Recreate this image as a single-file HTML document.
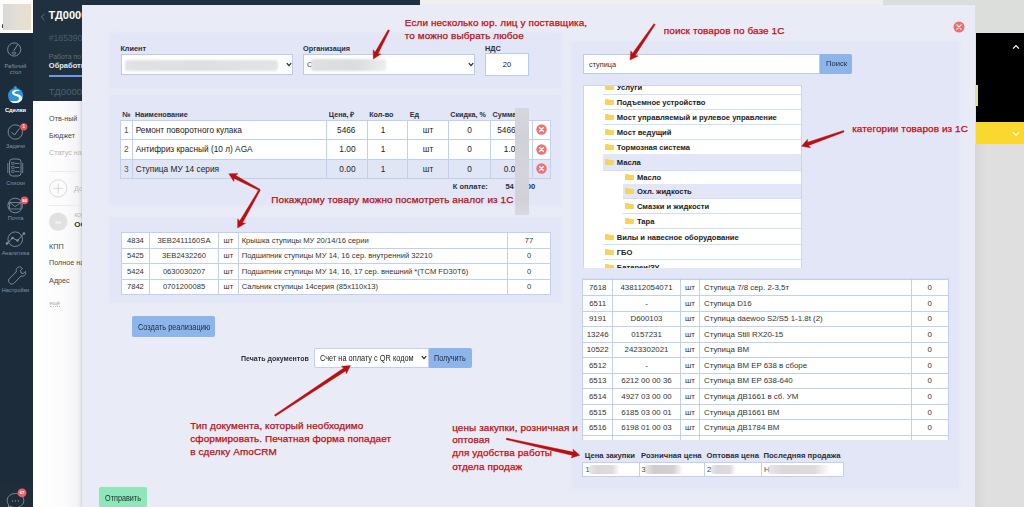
<!DOCTYPE html>
<html><head><meta charset="utf-8">
<style>
*{margin:0;padding:0;box-sizing:border-box}
html,body{width:1024px;height:507px;overflow:hidden;background:#e0dfdf;font-family:"Liberation Sans",sans-serif;position:relative}
.a{position:absolute}
.nw{white-space:nowrap}
</style></head><body>

<div class="a" style="left:0.00px;top:0.00px;width:33.00px;height:507.00px;background:#1d2c3a"></div>
<div class="a" style="left:33.00px;top:0.00px;width:387.00px;height:101.00px;background:#1f313f"></div>
<div class="a" style="left:420.00px;top:0.00px;width:463.00px;height:33.00px;background:#eff0ed"></div>
<div class="a" style="left:883.00px;top:0.00px;width:141.00px;height:33.00px;background:#dcdedb"></div>
<div class="a" style="left:33.00px;top:101.00px;width:49.00px;height:406.00px;background:linear-gradient(90deg,#fdfefe 0%,#fcfcfd 60%,#f4f4f6 90%,#e4e4e8 100%)"></div>
<div class="a" style="left:976.00px;top:33.00px;width:48.00px;height:89.00px;background:#000"></div>
<div class="a" style="left:976.00px;top:122.00px;width:48.00px;height:22.00px;background:#fbd82f"></div>
<div class="a" style="left:975.00px;top:144.00px;width:11.00px;height:363.00px;background:linear-gradient(90deg,#d6d6d8,#dfdede)"></div>
<svg class="a" style="left:1011.5px;top:43.5px" width="8" height="6" viewBox="0 0 8 6"><path d="M1 4.6 L4 1.6 L7 4.6" fill="none" stroke="#fff" stroke-width="1.3"/></svg>
<svg class="a" style="left:1011.5px;top:131px" width="8" height="6" viewBox="0 0 8 6"><path d="M1 1.4 L4 4.4 L7 1.4" fill="none" stroke="#fff" stroke-width="1.3"/></svg>
<div class="a" style="left:975.00px;top:85.00px;width:2.50px;height:20.50px;background:#e4e27a"></div>
<div class="a" style="left:0.00px;top:0.00px;width:32.50px;height:32.50px;background:#fbfbfa"></div>
<div class="a" style="left:3.00px;top:3.50px;width:28.00px;height:26.50px;background:linear-gradient(90deg,#d9d8d6 0%,#e2ddd6 45%,#e9dfcb 100%);filter:blur(0.5px)"></div>
<div class="a" style="left:1.80px;top:23.50px;width:1.50px;height:4.00px;background:#3a3a3a;border-radius:1px;filter:blur(0.4px)"></div>
<svg class="a" style="left:0;top:0" width="33" height="507" viewBox="0 0 33 507"><rect x="0" y="483.5" width="33" height="24" fill="#1f2d3b"/><circle cx="14.2" cy="49.5" r="6.6" fill="none" stroke="#8592a0" stroke-width="0.9"/><path d="M14 50.5 L17.5 44.8" stroke="#8592a0" stroke-width="1" stroke-linecap="round"/><ellipse cx="14" cy="53.2" rx="1.9" ry="1.1" fill="none" stroke="#8592a0" stroke-width="0.8"/><circle cx="15.6" cy="95.7" r="7.6" fill="#2d93db"/><circle cx="15.3" cy="87.6" r="1.6" fill="#2d93db"/><path d="M20.5 90.5 C16 88.5 10.5 90.5 12.5 94 C14 96.5 19.5 95.5 19 99 C18.5 101.5 14 102 9.5 100.5 C12 103.8 18.5 104 21.5 100.5 C23.5 97.5 21 94.5 16.5 94 C13 93.5 14.5 90.5 20.5 90.5Z" fill="#fff"/><circle cx="15.3" cy="132" r="7.2" fill="none" stroke="#8592a0" stroke-width="0.9"/><path d="M11.5 132 L14.5 135 L19.5 128.5" fill="none" stroke="#8592a0" stroke-width="1"/><circle cx="23.8" cy="126.8" r="3.6" fill="#e8585d"/><rect x="9.5" y="159" width="11.5" height="17" rx="3" fill="none" stroke="#8592a0" stroke-width="0.9"/><path d="M7.8 163 v10 M22.7 163 v10" stroke="#8592a0" stroke-width="0.8"/><rect x="11.8" y="162.5" width="2.2" height="2" fill="none" stroke="#8592a0" stroke-width="0.6"/><path d="M15 163.5 h4.3" stroke="#8592a0" stroke-width="0.8"/><rect x="11.8" y="166.5" width="2.2" height="2" fill="none" stroke="#8592a0" stroke-width="0.6"/><path d="M15 167.5 h4.3" stroke="#8592a0" stroke-width="0.8"/><rect x="11.8" y="170.5" width="2.2" height="2" fill="none" stroke="#8592a0" stroke-width="0.6"/><path d="M15 171.5 h4.3" stroke="#8592a0" stroke-width="0.8"/><circle cx="15.2" cy="205.5" r="7.3" fill="none" stroke="#8592a0" stroke-width="0.9"/><path d="M9.5 202.5 h11.5 v6.5 h-11.5z M9.5 202.5 L15.2 206.5 L21 202.5" fill="none" stroke="#8592a0" stroke-width="0.8"/><circle cx="24.5" cy="200.3" r="3.9" fill="#e8585d"/><circle cx="15.2" cy="239.2" r="7.3" fill="none" stroke="#8592a0" stroke-width="0.9"/><path d="M7 243.5 L12.5 238 L17.5 240.5 L24 233.5" fill="none" stroke="#8592a0" stroke-width="1"/><circle cx="7" cy="243.5" r="1.3" fill="#8592a0"/><circle cx="12.5" cy="238" r="1.2" fill="#8592a0"/><circle cx="17.5" cy="240.5" r="1.2" fill="#8592a0"/><circle cx="24" cy="233.5" r="1.3" fill="#8592a0"/><path d="M20.5 267 C17.5 266.5 15.5 269 16.3 271.8 L9 279 C8 280.2 8.5 282.3 10 283.5 C11.2 284.5 13 284.3 14 283.2 L21 276 C24 277 26.5 274.5 25.5 271.5 L23.3 273.5 L21 273 L20.5 270.5 L22.5 268.5 Z" fill="none" stroke="#8592a0" stroke-width="0.9"/><path d="M15.5 493.5 C20.5 493.5 23.8 496.5 23.8 500.5 C23.8 504.5 20.5 507.5 15.5 507.5 C13.5 507.5 11.5 507 10 506 L8.3 508 L8.6 504.5 C7.6 503.3 7.2 502 7.2 500.5 C7.2 496.5 10.5 493.5 15.5 493.5Z" fill="none" stroke="#8592a0" stroke-width="0.9"/><circle cx="12.5" cy="501" r="0.7" fill="#8592a0"/><circle cx="15.5" cy="501" r="0.7" fill="#8592a0"/><circle cx="18.5" cy="501" r="0.7" fill="#8592a0"/><circle cx="22" cy="492.8" r="4.4" fill="#e8646a"/></svg>
<div class="a nw" style="left:-126.20px;width:300px;text-align:center;top:124.99px;font-size:4.5px;line-height:1;font-weight:bold;color:#fff;">1</div>
<div class="a nw" style="left:-125.50px;width:300px;text-align:center;top:198.54px;font-size:4.2px;line-height:1;font-weight:bold;color:#fff;">84</div>
<div class="a nw" style="left:-128.00px;width:300px;text-align:center;top:491.04px;font-size:4.2px;line-height:1;font-weight:bold;color:#fff;">67</div>
<div class="a nw" style="left:-134.50px;width:300px;text-align:center;top:63.76px;font-size:5.6px;line-height:1;font-weight:normal;color:#8592a0;">Рабочий</div>
<div class="a nw" style="left:-134.50px;width:300px;text-align:center;top:69.76px;font-size:5.6px;line-height:1;font-weight:normal;color:#8592a0;">стол</div>
<div class="a nw" style="left:-134.50px;width:300px;text-align:center;top:108.39px;font-size:5.8px;line-height:1;font-weight:bold;color:#fff;">Сделки</div>
<div class="a nw" style="left:-134.50px;width:300px;text-align:center;top:144.06px;font-size:5.6px;line-height:1;font-weight:normal;color:#8592a0;">Задачи</div>
<div class="a nw" style="left:-134.50px;width:300px;text-align:center;top:181.46px;font-size:5.6px;line-height:1;font-weight:normal;color:#8592a0;">Списки</div>
<div class="a nw" style="left:-134.50px;width:300px;text-align:center;top:215.76px;font-size:5.6px;line-height:1;font-weight:normal;color:#8592a0;">Почта</div>
<div class="a nw" style="left:-134.50px;width:300px;text-align:center;top:251.06px;font-size:5.6px;line-height:1;font-weight:normal;color:#8592a0;">Аналитика</div>
<div class="a nw" style="left:-134.50px;width:300px;text-align:center;top:288.26px;font-size:5.6px;line-height:1;font-weight:normal;color:#8592a0;">Настройки</div>
<div class="a" style="left:33px;top:0;width:49px;height:507px;overflow:hidden">
<svg class="a" style="left:7px;top:13px" width="6" height="8" viewBox="0 0 6 8"><path d="M4.5 0.8 L1.3 4 L4.5 7.2" fill="none" stroke="#6f7d8b" stroke-width="0.9"/></svg>
<div class="a nw" style="left:15.50px;top:10.09px;font-size:11px;line-height:1;font-weight:bold;color:#fff;">ТД00000117</div>
<div class="a nw" style="left:15.80px;top:34.32px;font-size:8.6px;line-height:1;font-weight:normal;color:#4a5d6a;">#1853902</div>
<div class="a nw" style="left:15.80px;top:54.16px;font-size:6.9px;line-height:1;font-weight:normal;color:#5f6d7b;">Работа по заявкам</div>
<div class="a nw" style="left:15.80px;top:62.45px;font-size:7.5px;line-height:1;font-weight:bold;color:#e8ecef;">Обработка</div>
<div class="a" style="left:15.5px;top:75px;width:40px;height:2px;background:#6b9be0"></div>
<div class="a nw" style="left:15.80px;top:86.87px;font-size:9.6px;line-height:1;font-weight:normal;color:#4d616e;">ТД00000117</div>
<div class="a nw" style="left:16.10px;top:114.71px;font-size:7.2px;line-height:1;font-weight:normal;color:#4a4a4a;">Отв-ный</div>
<div class="a nw" style="left:16.10px;top:131.61px;font-size:7.2px;line-height:1;font-weight:normal;color:#4a4a4a;">Бюджет</div>
<div class="a nw" style="left:16.10px;top:148.81px;font-size:7.2px;line-height:1;font-weight:normal;color:#b5b5b5;">Статус на</div>
<div class="a" style="left:16px;top:170.5px;width:40px;height:1px;background:#ececec"></div>
<svg class="a" style="left:15px;top:178px" width="22" height="22" viewBox="0 0 22 22"><circle cx="10.2" cy="10.4" r="8.6" fill="none" stroke="#d6d6d6" stroke-width="0.9"/><path d="M10.2 5.5 v9.8 M5.3 10.4 h9.8" stroke="#cfcfcf" stroke-width="0.8"/></svg>
<div class="a nw" style="left:41.00px;top:185.11px;font-size:7.2px;line-height:1;font-weight:normal;color:#b8b8b8;">Добавить</div>
<div class="a" style="left:16px;top:205px;width:40px;height:1px;background:#ececec"></div>
<svg class="a" style="left:15px;top:211px" width="22" height="22" viewBox="0 0 22 22"><circle cx="10.2" cy="10.7" r="9.3" fill="#e1e1e1"/><path d="M7.5 10.5 h5.5 v2 h-5.5z" fill="#f5f5f5"/></svg>
<div class="a nw" style="left:41.50px;top:214.11px;font-size:4.6px;line-height:1;font-weight:normal;color:#a8a8a8;">КОНТАКТ</div>
<div class="a nw" style="left:41.20px;top:221.43px;font-size:8px;line-height:1;font-weight:bold;color:#2f2f2f;">ООО</div>
<div class="a nw" style="left:16.10px;top:242.51px;font-size:7.2px;line-height:1;font-weight:normal;color:#4a4a4a;">КПП</div>
<div class="a nw" style="left:16.10px;top:259.31px;font-size:7.2px;line-height:1;font-weight:normal;color:#4a4a4a;">Полное наименование</div>
<div class="a nw" style="left:16.10px;top:277.11px;font-size:7.2px;line-height:1;font-weight:normal;color:#4a4a4a;">Адрес</div>
<div class="a nw" style="left:16.50px;top:300.73px;font-size:5.4px;line-height:1;font-weight:normal;color:#a5a5a5;border-bottom:1px dotted #bbb">ещё</div>
</div>
<div class="a" style="left:82.00px;top:5.00px;width:893.00px;height:502.00px;background:#e9ebf6;box-shadow:-1px 0 1px rgba(0,0,0,0.05)"></div>
<div class="a" style="left:110.00px;top:33.00px;width:451.00px;height:55.00px;background:#e2e6f7;box-shadow:0 0 4px 0px rgba(226,230,247,0.9)"></div>
<div class="a" style="left:110.00px;top:95.00px;width:451.00px;height:110.00px;background:#e2e6f7;box-shadow:0 0 4px 0px rgba(226,230,247,0.9)"></div>
<div class="a" style="left:110.00px;top:218.00px;width:451.00px;height:84.00px;background:#e2e6f7;box-shadow:0 0 4px 0px rgba(226,230,247,0.9)"></div>
<div class="a" style="left:572.00px;top:42.00px;width:387.00px;height:446.00px;background:#e2e6f7;box-shadow:0 0 4px 0px rgba(226,230,247,0.9)"></div>
<div class="a nw " style="left:120.40px;top:44.62px;font-size:7.3px;line-height:1;font-weight:bold;color:#2a2f3a;">Клиент</div>
<div class="a nw " style="left:303.00px;top:44.62px;font-size:7.3px;line-height:1;font-weight:bold;color:#2a2f3a;">Организация</div>
<div class="a nw " style="left:485.00px;top:44.62px;font-size:7.3px;line-height:1;font-weight:bold;color:#2a2f3a;">НДС</div>
<div class="a" style="left:120.50px;top:53.50px;width:172.00px;height:21.00px;background:#fff;border:1px solid #b9cbe9"></div>
<div class="a" style="left:303.00px;top:53.50px;width:171.60px;height:21.00px;background:#fff;border:1px solid #b9cbe9"></div>
<div class="a" style="left:485.00px;top:53.00px;width:43.50px;height:22.50px;background:#fff;border:1px solid #b9cbe9"></div>
<div class="a nw" style="left:357.00px;width:300px;text-align:center;top:61.15px;font-size:7.5px;line-height:1;font-weight:normal;color:#222;">20</div>
<svg class="a" style="left:285.5px;top:61.5px" width="6" height="5" viewBox="0 0 6 5"><path d="M0.8 1.2L3 3.6L5.2 1.2" stroke="#222" stroke-width="1.2" fill="none"/></svg>
<svg class="a" style="left:467.5px;top:61.5px" width="6" height="5" viewBox="0 0 6 5"><path d="M0.8 1.2L3 3.6L5.2 1.2" stroke="#222" stroke-width="1.2" fill="none"/></svg>
<div class="a" style="left:124.50px;top:59.50px;width:153.50px;height:11.00px;background:linear-gradient(90deg,#e2e2e4,#dfdfe1 50%,#e4e4e6);filter:blur(1.2px);border-radius:3px"></div>
<div class="a nw " style="left:307.00px;top:61.15px;font-size:7.5px;line-height:1;font-weight:normal;color:#333;">С</div>
<div class="a" style="left:311.00px;top:58.50px;width:75.00px;height:12.50px;background:linear-gradient(90deg,#e0e0e2,#dcdcde 60%,rgba(225,225,227,0.6));filter:blur(1.2px);border-radius:2px"></div>
<div class="a nw " style="left:122.50px;top:110.51px;font-size:7.2px;line-height:1;font-weight:bold;color:#2a2f3a;">№</div>
<div class="a nw " style="left:135.00px;top:110.51px;font-size:7.2px;line-height:1;font-weight:bold;color:#2a2f3a;">Наименование</div>
<div class="a nw " style="left:328.80px;top:110.51px;font-size:7.2px;line-height:1;font-weight:bold;color:#2a2f3a;">Цена, ₽</div>
<div class="a nw " style="left:369.20px;top:110.51px;font-size:7.2px;line-height:1;font-weight:bold;color:#2a2f3a;">Кол-во</div>
<div class="a nw " style="left:409.80px;top:110.51px;font-size:7.2px;line-height:1;font-weight:bold;color:#2a2f3a;">Ед</div>
<div class="a nw " style="left:450.20px;top:110.51px;font-size:7.2px;line-height:1;font-weight:bold;color:#2a2f3a;">Скидка, %</div>
<div class="a nw " style="left:492.60px;top:110.51px;font-size:7.2px;line-height:1;font-weight:bold;color:#2a2f3a;">Сумма</div>
<div class="a" style="left:120.50px;top:120.30px;width:430.30px;height:18.80px;background:#fff"></div>
<div class="a" style="left:120.50px;top:139.10px;width:430.30px;height:20.00px;background:#fff"></div>
<div class="a" style="left:120.50px;top:159.10px;width:430.30px;height:19.20px;background:#e1e6f6"></div>
<div class="a" style="left:120.00px;top:120.00px;width:431.00px;height:1.00px;background:#c2d0ec"></div>
<div class="a" style="left:120.00px;top:139.00px;width:431.00px;height:1.00px;background:#c2d0ec"></div>
<div class="a" style="left:120.00px;top:159.00px;width:431.00px;height:1.00px;background:#c2d0ec"></div>
<div class="a" style="left:120.00px;top:178.00px;width:431.00px;height:1.00px;background:#c2d0ec"></div>
<div class="a" style="left:120.00px;top:120.00px;width:1.00px;height:59.00px;background:#c2d0ec"></div>
<div class="a" style="left:132.00px;top:120.00px;width:1.00px;height:59.00px;background:#c2d0ec"></div>
<div class="a" style="left:326.00px;top:120.00px;width:1.00px;height:59.00px;background:#c2d0ec"></div>
<div class="a" style="left:367.00px;top:120.00px;width:1.00px;height:59.00px;background:#c2d0ec"></div>
<div class="a" style="left:407.00px;top:120.00px;width:1.00px;height:59.00px;background:#c2d0ec"></div>
<div class="a" style="left:448.00px;top:120.00px;width:1.00px;height:59.00px;background:#c2d0ec"></div>
<div class="a" style="left:490.00px;top:120.00px;width:1.00px;height:59.00px;background:#c2d0ec"></div>
<div class="a" style="left:532.00px;top:120.00px;width:1.00px;height:59.00px;background:#c2d0ec"></div>
<div class="a" style="left:550.00px;top:120.00px;width:1.00px;height:59.00px;background:#c2d0ec"></div>
<div class="a nw" style="left:-23.60px;width:300px;text-align:center;top:125.67px;font-size:8.3px;line-height:1;font-weight:normal;color:#555;">1</div>
<div class="a nw " style="left:135.70px;top:125.67px;font-size:8.3px;line-height:1;font-weight:normal;color:#222;">Ремонт поворотного кулака</div>
<div class="a nw" style="left:55.50px;width:300px;text-align:right;top:125.67px;font-size:8.3px;line-height:1;font-weight:normal;color:#222;">5466</div>
<div class="a nw" style="left:233.00px;width:300px;text-align:center;top:125.67px;font-size:8.3px;line-height:1;font-weight:normal;color:#222;">1</div>
<div class="a nw" style="left:278.00px;width:300px;text-align:center;top:125.67px;font-size:8.3px;line-height:1;font-weight:normal;color:#222;">шт</div>
<div class="a nw" style="left:319.50px;width:300px;text-align:center;top:125.67px;font-size:8.3px;line-height:1;font-weight:normal;color:#222;">0</div>
<div class="a nw " style="left:497.20px;top:125.67px;font-size:8.3px;line-height:1;font-weight:normal;color:#222;">5466</div>
<svg class="a" style="left:535.90px;top:124.20px" width="11" height="11" viewBox="0 0 11 11"><circle cx="5.5" cy="5.5" r="5.2" fill="#ec7376"/><path d="M3.5 3.5L7.5 7.5M7.5 3.5L3.5 7.5" stroke="#fff" stroke-width="1.1" stroke-linecap="round"/></svg>
<div class="a nw" style="left:-23.60px;width:300px;text-align:center;top:145.07px;font-size:8.3px;line-height:1;font-weight:normal;color:#555;">2</div>
<div class="a nw " style="left:135.70px;top:145.07px;font-size:8.3px;line-height:1;font-weight:normal;color:#222;">Антифриз красный (10 л) AGA</div>
<div class="a nw" style="left:55.50px;width:300px;text-align:right;top:145.07px;font-size:8.3px;line-height:1;font-weight:normal;color:#222;">1.00</div>
<div class="a nw" style="left:233.00px;width:300px;text-align:center;top:145.07px;font-size:8.3px;line-height:1;font-weight:normal;color:#222;">1</div>
<div class="a nw" style="left:278.00px;width:300px;text-align:center;top:145.07px;font-size:8.3px;line-height:1;font-weight:normal;color:#222;">шт</div>
<div class="a nw" style="left:319.50px;width:300px;text-align:center;top:145.07px;font-size:8.3px;line-height:1;font-weight:normal;color:#222;">0</div>
<div class="a nw " style="left:503.80px;top:145.07px;font-size:8.3px;line-height:1;font-weight:normal;color:#222;">1.00</div>
<svg class="a" style="left:535.90px;top:143.60px" width="11" height="11" viewBox="0 0 11 11"><circle cx="5.5" cy="5.5" r="5.2" fill="#ec7376"/><path d="M3.5 3.5L7.5 7.5M7.5 3.5L3.5 7.5" stroke="#fff" stroke-width="1.1" stroke-linecap="round"/></svg>
<div class="a nw" style="left:-23.60px;width:300px;text-align:center;top:164.67px;font-size:8.3px;line-height:1;font-weight:normal;color:#555;">3</div>
<div class="a nw " style="left:135.70px;top:164.67px;font-size:8.3px;line-height:1;font-weight:normal;color:#222;">Ступица МУ 14 серия</div>
<div class="a nw" style="left:55.50px;width:300px;text-align:right;top:164.67px;font-size:8.3px;line-height:1;font-weight:normal;color:#222;">0.00</div>
<div class="a nw" style="left:233.00px;width:300px;text-align:center;top:164.67px;font-size:8.3px;line-height:1;font-weight:normal;color:#222;">1</div>
<div class="a nw" style="left:278.00px;width:300px;text-align:center;top:164.67px;font-size:8.3px;line-height:1;font-weight:normal;color:#222;">шт</div>
<div class="a nw" style="left:319.50px;width:300px;text-align:center;top:164.67px;font-size:8.3px;line-height:1;font-weight:normal;color:#222;">0</div>
<div class="a nw " style="left:503.80px;top:164.67px;font-size:8.3px;line-height:1;font-weight:normal;color:#222;">0.00</div>
<svg class="a" style="left:535.90px;top:163.20px" width="11" height="11" viewBox="0 0 11 11"><circle cx="5.5" cy="5.5" r="5.2" fill="#ec7376"/><path d="M3.5 3.5L7.5 7.5M7.5 3.5L3.5 7.5" stroke="#fff" stroke-width="1.1" stroke-linecap="round"/></svg>
<div class="a nw " style="left:452.80px;top:183.15px;font-size:7.5px;line-height:1;font-weight:bold;color:#2a2f3a;">К оплате:</div>
<div class="a nw " style="left:505.40px;top:183.07px;font-size:7.6px;line-height:1;font-weight:bold;color:#2a2f3a;">54</div>
<div class="a nw" style="left:235.30px;width:300px;text-align:right;top:183.07px;font-size:7.6px;line-height:1;font-weight:bold;color:#2a2f3a;">00</div>
<div class="a" style="left:514.50px;top:108.00px;width:14.00px;height:107.00px;background:linear-gradient(180deg,#d6d7de,#d0d1d9 30%,#d4d5dc 60%,#cfd0d8 85%,#d8d9e0);filter:blur(0.7px)"></div>
<div class="a" style="left:121.30px;top:232.50px;width:429.10px;height:62.00px;background:#fff"></div>
<div class="a" style="left:121.00px;top:232.00px;width:430.00px;height:1.00px;background:#c2d0ec"></div>
<div class="a" style="left:121.00px;top:248.00px;width:430.00px;height:1.00px;background:#c2d0ec"></div>
<div class="a" style="left:121.00px;top:263.00px;width:430.00px;height:1.00px;background:#c2d0ec"></div>
<div class="a" style="left:121.00px;top:279.00px;width:430.00px;height:1.00px;background:#c2d0ec"></div>
<div class="a" style="left:121.00px;top:294.00px;width:430.00px;height:1.00px;background:#c2d0ec"></div>
<div class="a" style="left:121.00px;top:232.00px;width:1.00px;height:63.00px;background:#c2d0ec"></div>
<div class="a" style="left:149.00px;top:232.00px;width:1.00px;height:63.00px;background:#c2d0ec"></div>
<div class="a" style="left:218.00px;top:232.00px;width:1.00px;height:63.00px;background:#c2d0ec"></div>
<div class="a" style="left:238.00px;top:232.00px;width:1.00px;height:63.00px;background:#c2d0ec"></div>
<div class="a" style="left:507.00px;top:232.00px;width:1.00px;height:63.00px;background:#c2d0ec"></div>
<div class="a" style="left:550.00px;top:232.00px;width:1.00px;height:63.00px;background:#c2d0ec"></div>
<div class="a nw" style="left:-14.60px;width:300px;text-align:center;top:236.52px;font-size:7.6px;line-height:1;font-weight:normal;color:#333;">4834</div>
<div class="a nw" style="left:34.00px;width:300px;text-align:center;top:236.52px;font-size:7.6px;line-height:1;font-weight:normal;color:#333;">3EB2411160SA</div>
<div class="a nw" style="left:78.40px;width:300px;text-align:center;top:236.52px;font-size:7.6px;line-height:1;font-weight:normal;color:#333;">шт</div>
<div class="a nw " style="left:241.70px;top:236.52px;font-size:7.6px;line-height:1;font-weight:normal;color:#333;">Крышка ступицы МУ 20/14/16 серии</div>
<div class="a nw" style="left:379.00px;width:300px;text-align:center;top:236.52px;font-size:7.6px;line-height:1;font-weight:normal;color:#333;">77</div>
<div class="a nw" style="left:-14.60px;width:300px;text-align:center;top:252.02px;font-size:7.6px;line-height:1;font-weight:normal;color:#333;">5425</div>
<div class="a nw" style="left:34.00px;width:300px;text-align:center;top:252.02px;font-size:7.6px;line-height:1;font-weight:normal;color:#333;">3EB2432260</div>
<div class="a nw" style="left:78.40px;width:300px;text-align:center;top:252.02px;font-size:7.6px;line-height:1;font-weight:normal;color:#333;">шт</div>
<div class="a nw " style="left:241.70px;top:252.02px;font-size:7.6px;line-height:1;font-weight:normal;color:#333;">Подшипник ступицы МУ 14, 16 сер. внутренний 32210</div>
<div class="a nw" style="left:379.00px;width:300px;text-align:center;top:252.02px;font-size:7.6px;line-height:1;font-weight:normal;color:#333;">0</div>
<div class="a nw" style="left:-14.60px;width:300px;text-align:center;top:267.52px;font-size:7.6px;line-height:1;font-weight:normal;color:#333;">5424</div>
<div class="a nw" style="left:34.00px;width:300px;text-align:center;top:267.52px;font-size:7.6px;line-height:1;font-weight:normal;color:#333;">0630030207</div>
<div class="a nw" style="left:78.40px;width:300px;text-align:center;top:267.52px;font-size:7.6px;line-height:1;font-weight:normal;color:#333;">шт</div>
<div class="a nw " style="left:241.70px;top:267.52px;font-size:7.6px;line-height:1;font-weight:normal;color:#333;">Подшипник ступицы МУ 14, 16, 17 сер. внешний *(TCM FD30T6)</div>
<div class="a nw" style="left:379.00px;width:300px;text-align:center;top:267.52px;font-size:7.6px;line-height:1;font-weight:normal;color:#333;">0</div>
<div class="a nw" style="left:-14.60px;width:300px;text-align:center;top:283.02px;font-size:7.6px;line-height:1;font-weight:normal;color:#333;">7842</div>
<div class="a nw" style="left:34.00px;width:300px;text-align:center;top:283.02px;font-size:7.6px;line-height:1;font-weight:normal;color:#333;">0701200085</div>
<div class="a nw" style="left:78.40px;width:300px;text-align:center;top:283.02px;font-size:7.6px;line-height:1;font-weight:normal;color:#333;">шт</div>
<div class="a nw " style="left:241.70px;top:283.02px;font-size:7.6px;line-height:1;font-weight:normal;color:#333;">Сальник ступицы 14серия (85x110x13)</div>
<div class="a nw" style="left:379.00px;width:300px;text-align:center;top:283.02px;font-size:7.6px;line-height:1;font-weight:normal;color:#333;">0</div>
<div class="a" style="left:132.10px;top:316.10px;width:82.80px;height:20.80px;background:#8db5ea;border-radius:2px"></div>
<div class="a nw" style="left:137.80px;top:323.12px;font-size:8.6px;line-height:1;font-weight:normal;color:#1a2940;transform:scaleX(0.86);transform-origin:0 0;">Создать реализацию</div>
<div class="a nw" style="left:241.00px;top:355.15px;font-size:7.5px;line-height:1;font-weight:bold;color:#2a2f3a;transform:scaleX(0.935);transform-origin:0 0;">Печать документов</div>
<div class="a" style="left:314.40px;top:347.90px;width:114.80px;height:20.20px;background:#fff;border:1px solid #c3cfe6;border-radius:2px 0 0 2px"></div>
<div class="a nw" style="left:319.50px;top:354.56px;font-size:8.2px;line-height:1;font-weight:normal;color:#222;transform:scaleX(0.9);transform-origin:0 0;">Счет на оплату с QR кодом</div>
<svg class="a" style="left:421px;top:355px" width="6" height="5" viewBox="0 0 6 5"><path d="M0.8 1.2L3 3.6L5.2 1.2" stroke="#222" stroke-width="1.2" fill="none"/></svg>
<div class="a" style="left:429.20px;top:347.90px;width:43.10px;height:20.20px;background:#8db5ea;border-radius:0 2px 2px 0"></div>
<div class="a nw" style="left:433.50px;top:354.56px;font-size:8.2px;line-height:1;font-weight:normal;color:#1a2940;transform:scaleX(0.88);transform-origin:0 0;">Получить</div>
<div class="a" style="left:99.00px;top:487.00px;width:48.00px;height:20.00px;background:#8fe6b9;border-radius:2px"></div>
<div class="a nw" style="left:104.50px;top:494.86px;font-size:8.2px;line-height:1;font-weight:normal;color:#1a2a2a;transform:scaleX(0.885);transform-origin:0 0;">Отправить</div>
<div class="a" style="left:582.60px;top:53.60px;width:237.10px;height:20.70px;background:#fff;border:1px solid #b9cbe9"></div>
<div class="a nw " style="left:589.00px;top:60.82px;font-size:7.3px;line-height:1;font-weight:normal;color:#333;">ступица</div>
<div class="a" style="left:819.70px;top:53.80px;width:32.10px;height:20.70px;background:#8db5ea;border-radius:0 2px 2px 0"></div>
<div class="a nw" style="left:826.00px;top:60.43px;font-size:8px;line-height:1;font-weight:normal;color:#1a2940;transform:scaleX(0.95);transform-origin:0 0;">Поиск</div>
<div class="a" style="left:582.8px;top:85.3px;width:219.5px;height:182.5px;background:#fff;border:1px solid #c9d6ee;border-bottom:none"></div>
<div class="a" style="left:583.8px;top:86.3px;width:217.5px;height:181.5px;overflow:hidden">
<div class="a" style="left:19.40px;top:7.70px;width:199.10px;height:1.00px;background:#d3def1"></div>
<div class="a" style="left:21.60px;top:-1.70px;width:8.80px;height:5.20px;background:#f6d35a;border-radius:1px"></div>
<div class="a" style="left:21.60px;top:-2.60px;width:3.50px;height:1.30px;background:#f6d35a;border-radius:1px 1px 0 0"></div>
<div class="a nw" style="left:33.00px;top:-2.73px;font-size:7.6px;line-height:1;font-weight:bold;color:#222">Услуги</div>
<div class="a" style="left:19.40px;top:22.70px;width:199.10px;height:1.00px;background:#d3def1"></div>
<div class="a" style="left:21.60px;top:13.30px;width:8.80px;height:5.20px;background:#f6d35a;border-radius:1px"></div>
<div class="a" style="left:21.60px;top:12.40px;width:3.50px;height:1.30px;background:#f6d35a;border-radius:1px 1px 0 0"></div>
<div class="a nw" style="left:33.00px;top:12.27px;font-size:7.6px;line-height:1;font-weight:bold;color:#222">Подъемное устройство</div>
<div class="a" style="left:19.40px;top:37.70px;width:199.10px;height:1.00px;background:#d3def1"></div>
<div class="a" style="left:21.60px;top:28.30px;width:8.80px;height:5.20px;background:#f6d35a;border-radius:1px"></div>
<div class="a" style="left:21.60px;top:27.40px;width:3.50px;height:1.30px;background:#f6d35a;border-radius:1px 1px 0 0"></div>
<div class="a nw" style="left:33.00px;top:27.27px;font-size:7.6px;line-height:1;font-weight:bold;color:#222">Мост управляемый и рулевое управление</div>
<div class="a" style="left:19.40px;top:52.70px;width:199.10px;height:1.00px;background:#d3def1"></div>
<div class="a" style="left:21.60px;top:43.30px;width:8.80px;height:5.20px;background:#f6d35a;border-radius:1px"></div>
<div class="a" style="left:21.60px;top:42.40px;width:3.50px;height:1.30px;background:#f6d35a;border-radius:1px 1px 0 0"></div>
<div class="a nw" style="left:33.00px;top:42.27px;font-size:7.6px;line-height:1;font-weight:bold;color:#222">Мост ведущий</div>
<div class="a" style="left:19.40px;top:67.70px;width:199.10px;height:1.00px;background:#d3def1"></div>
<div class="a" style="left:21.60px;top:58.30px;width:8.80px;height:5.20px;background:#f6d35a;border-radius:1px"></div>
<div class="a" style="left:21.60px;top:57.40px;width:3.50px;height:1.30px;background:#f6d35a;border-radius:1px 1px 0 0"></div>
<div class="a nw" style="left:33.00px;top:57.27px;font-size:7.6px;line-height:1;font-weight:bold;color:#222">Тормозная система</div>
<div class="a" style="left:19.40px;top:68.00px;width:199.10px;height:15.70px;background:#e2e6f6"></div>
<div class="a" style="left:19.40px;top:83.70px;width:199.10px;height:1.00px;background:#d3def1"></div>
<div class="a" style="left:21.60px;top:73.30px;width:8.80px;height:5.20px;background:#f6d35a;border-radius:1px"></div>
<div class="a" style="left:21.60px;top:72.40px;width:3.50px;height:1.30px;background:#f6d35a;border-radius:1px 1px 0 0"></div>
<div class="a nw" style="left:33.00px;top:72.27px;font-size:7.6px;line-height:1;font-weight:bold;color:#222">Масла</div>
<div class="a" style="left:39.20px;top:97.70px;width:179.30px;height:1.00px;background:#d3def1"></div>
<div class="a" style="left:41.70px;top:88.30px;width:8.80px;height:5.20px;background:#f6d35a;border-radius:1px"></div>
<div class="a" style="left:41.70px;top:87.40px;width:3.50px;height:1.30px;background:#f6d35a;border-radius:1px 1px 0 0"></div>
<div class="a nw" style="left:53.10px;top:87.27px;font-size:7.6px;line-height:1;font-weight:bold;color:#222">Масло</div>
<div class="a" style="left:39.20px;top:97.70px;width:179.30px;height:14.70px;background:#e2e6f6"></div>
<div class="a" style="left:39.20px;top:111.70px;width:179.30px;height:1.00px;background:#d3def1"></div>
<div class="a" style="left:41.70px;top:102.90px;width:8.80px;height:5.20px;background:#f6d35a;border-radius:1px"></div>
<div class="a" style="left:41.70px;top:102.00px;width:3.50px;height:1.30px;background:#f6d35a;border-radius:1px 1px 0 0"></div>
<div class="a nw" style="left:53.10px;top:101.87px;font-size:7.6px;line-height:1;font-weight:bold;color:#222">Охл. жидкость</div>
<div class="a" style="left:39.20px;top:126.70px;width:179.30px;height:1.00px;background:#d3def1"></div>
<div class="a" style="left:41.70px;top:117.60px;width:8.80px;height:5.20px;background:#f6d35a;border-radius:1px"></div>
<div class="a" style="left:41.70px;top:116.70px;width:3.50px;height:1.30px;background:#f6d35a;border-radius:1px 1px 0 0"></div>
<div class="a nw" style="left:53.10px;top:116.57px;font-size:7.6px;line-height:1;font-weight:bold;color:#222">Смазки и жидкости</div>
<div class="a" style="left:39.20px;top:141.70px;width:179.30px;height:1.00px;background:#d3def1"></div>
<div class="a" style="left:41.70px;top:132.50px;width:8.80px;height:5.20px;background:#f6d35a;border-radius:1px"></div>
<div class="a" style="left:41.70px;top:131.60px;width:3.50px;height:1.30px;background:#f6d35a;border-radius:1px 1px 0 0"></div>
<div class="a nw" style="left:53.10px;top:131.47px;font-size:7.6px;line-height:1;font-weight:bold;color:#222">Тара</div>
<div class="a" style="left:19.40px;top:157.70px;width:199.10px;height:1.00px;background:#d3def1"></div>
<div class="a" style="left:21.60px;top:148.90px;width:8.80px;height:5.20px;background:#f6d35a;border-radius:1px"></div>
<div class="a" style="left:21.60px;top:148.00px;width:3.50px;height:1.30px;background:#f6d35a;border-radius:1px 1px 0 0"></div>
<div class="a nw" style="left:33.00px;top:147.87px;font-size:7.6px;line-height:1;font-weight:bold;color:#222">Вилы и навесное оборудование</div>
<div class="a" style="left:19.40px;top:172.70px;width:199.10px;height:1.00px;background:#d3def1"></div>
<div class="a" style="left:21.60px;top:163.90px;width:8.80px;height:5.20px;background:#f6d35a;border-radius:1px"></div>
<div class="a" style="left:21.60px;top:163.00px;width:3.50px;height:1.30px;background:#f6d35a;border-radius:1px 1px 0 0"></div>
<div class="a nw" style="left:33.00px;top:162.87px;font-size:7.6px;line-height:1;font-weight:bold;color:#222">ГБО</div>
<div class="a" style="left:19.40px;top:188.70px;width:199.10px;height:1.00px;background:#d3def1"></div>
<div class="a" style="left:21.60px;top:178.90px;width:8.80px;height:5.20px;background:#f6d35a;border-radius:1px"></div>
<div class="a" style="left:21.60px;top:178.00px;width:3.50px;height:1.30px;background:#f6d35a;border-radius:1px 1px 0 0"></div>
<div class="a nw" style="left:33.00px;top:177.87px;font-size:7.6px;line-height:1;font-weight:bold;color:#222">Батареи/ЗУ</div>
</div>
<div class="a" style="left:582.90px;top:278.50px;width:365.30px;height:161.00px;background:#fff"></div>
<div class="a" style="left:582.00px;top:279.00px;width:367.00px;height:1.00px;background:#c2d0ec"></div>
<div class="a" style="left:582.00px;top:295.00px;width:367.00px;height:1.00px;background:#c2d0ec"></div>
<div class="a" style="left:582.00px;top:311.00px;width:367.00px;height:1.00px;background:#c2d0ec"></div>
<div class="a" style="left:582.00px;top:326.00px;width:367.00px;height:1.00px;background:#c2d0ec"></div>
<div class="a" style="left:582.00px;top:342.00px;width:367.00px;height:1.00px;background:#c2d0ec"></div>
<div class="a" style="left:582.00px;top:357.00px;width:367.00px;height:1.00px;background:#c2d0ec"></div>
<div class="a" style="left:582.00px;top:373.00px;width:367.00px;height:1.00px;background:#c2d0ec"></div>
<div class="a" style="left:582.00px;top:388.00px;width:367.00px;height:1.00px;background:#c2d0ec"></div>
<div class="a" style="left:582.00px;top:404.00px;width:367.00px;height:1.00px;background:#c2d0ec"></div>
<div class="a" style="left:582.00px;top:419.00px;width:367.00px;height:1.00px;background:#c2d0ec"></div>
<div class="a" style="left:582.00px;top:435.00px;width:367.00px;height:1.00px;background:#c2d0ec"></div>
<div class="a" style="left:582.00px;top:278.00px;width:367.00px;height:1.00px;background:#d5e0f2"></div>
<div class="a" style="left:582.00px;top:278.00px;width:1.00px;height:162.00px;background:#c2d0ec"></div>
<div class="a" style="left:612.00px;top:278.00px;width:1.00px;height:162.00px;background:#c2d0ec"></div>
<div class="a" style="left:680.00px;top:278.00px;width:1.00px;height:162.00px;background:#c2d0ec"></div>
<div class="a" style="left:699.00px;top:278.00px;width:1.00px;height:162.00px;background:#c2d0ec"></div>
<div class="a" style="left:911.00px;top:278.00px;width:1.00px;height:162.00px;background:#c2d0ec"></div>
<div class="a" style="left:948.00px;top:278.00px;width:1.00px;height:162.00px;background:#c2d0ec"></div>
<div class="a nw" style="left:447.70px;width:300px;text-align:center;top:284.09px;font-size:7.9px;line-height:1;font-weight:normal;color:#333;">7618</div>
<div class="a nw" style="left:496.50px;width:300px;text-align:center;top:284.09px;font-size:7.9px;line-height:1;font-weight:normal;color:#333;">438112054071</div>
<div class="a nw" style="left:540.00px;width:300px;text-align:center;top:284.09px;font-size:7.9px;line-height:1;font-weight:normal;color:#333;">шт</div>
<div class="a nw " style="left:704.00px;top:284.09px;font-size:7.9px;line-height:1;font-weight:normal;color:#333;">Ступица 7/8 сер. 2-3,5т</div>
<div class="a nw" style="left:779.80px;width:300px;text-align:center;top:284.09px;font-size:7.9px;line-height:1;font-weight:normal;color:#333;">0</div>
<div class="a nw" style="left:447.70px;width:300px;text-align:center;top:299.65px;font-size:7.9px;line-height:1;font-weight:normal;color:#333;">6511</div>
<div class="a nw" style="left:496.50px;width:300px;text-align:center;top:299.65px;font-size:7.9px;line-height:1;font-weight:normal;color:#333;">-</div>
<div class="a nw" style="left:540.00px;width:300px;text-align:center;top:299.65px;font-size:7.9px;line-height:1;font-weight:normal;color:#333;">шт</div>
<div class="a nw " style="left:704.00px;top:299.65px;font-size:7.9px;line-height:1;font-weight:normal;color:#333;">Ступица D16</div>
<div class="a nw" style="left:779.80px;width:300px;text-align:center;top:299.65px;font-size:7.9px;line-height:1;font-weight:normal;color:#333;">0</div>
<div class="a nw" style="left:447.70px;width:300px;text-align:center;top:315.21px;font-size:7.9px;line-height:1;font-weight:normal;color:#333;">9191</div>
<div class="a nw" style="left:496.50px;width:300px;text-align:center;top:315.21px;font-size:7.9px;line-height:1;font-weight:normal;color:#333;">D600103</div>
<div class="a nw" style="left:540.00px;width:300px;text-align:center;top:315.21px;font-size:7.9px;line-height:1;font-weight:normal;color:#333;">шт</div>
<div class="a nw " style="left:704.00px;top:315.21px;font-size:7.9px;line-height:1;font-weight:normal;color:#333;">Ступица daewoo S2/S5 1-1.8t (2)</div>
<div class="a nw" style="left:779.80px;width:300px;text-align:center;top:315.21px;font-size:7.9px;line-height:1;font-weight:normal;color:#333;">0</div>
<div class="a nw" style="left:447.70px;width:300px;text-align:center;top:330.77px;font-size:7.9px;line-height:1;font-weight:normal;color:#333;">13246</div>
<div class="a nw" style="left:496.50px;width:300px;text-align:center;top:330.77px;font-size:7.9px;line-height:1;font-weight:normal;color:#333;">0157231</div>
<div class="a nw" style="left:540.00px;width:300px;text-align:center;top:330.77px;font-size:7.9px;line-height:1;font-weight:normal;color:#333;">шт</div>
<div class="a nw " style="left:704.00px;top:330.77px;font-size:7.9px;line-height:1;font-weight:normal;color:#333;">Ступица Still RX20-15</div>
<div class="a nw" style="left:779.80px;width:300px;text-align:center;top:330.77px;font-size:7.9px;line-height:1;font-weight:normal;color:#333;">0</div>
<div class="a nw" style="left:447.70px;width:300px;text-align:center;top:346.33px;font-size:7.9px;line-height:1;font-weight:normal;color:#333;">10522</div>
<div class="a nw" style="left:496.50px;width:300px;text-align:center;top:346.33px;font-size:7.9px;line-height:1;font-weight:normal;color:#333;">2423302021</div>
<div class="a nw" style="left:540.00px;width:300px;text-align:center;top:346.33px;font-size:7.9px;line-height:1;font-weight:normal;color:#333;">шт</div>
<div class="a nw " style="left:704.00px;top:346.33px;font-size:7.9px;line-height:1;font-weight:normal;color:#333;">Ступица BM</div>
<div class="a nw" style="left:779.80px;width:300px;text-align:center;top:346.33px;font-size:7.9px;line-height:1;font-weight:normal;color:#333;">0</div>
<div class="a nw" style="left:447.70px;width:300px;text-align:center;top:361.89px;font-size:7.9px;line-height:1;font-weight:normal;color:#333;">6512</div>
<div class="a nw" style="left:496.50px;width:300px;text-align:center;top:361.89px;font-size:7.9px;line-height:1;font-weight:normal;color:#333;">-</div>
<div class="a nw" style="left:540.00px;width:300px;text-align:center;top:361.89px;font-size:7.9px;line-height:1;font-weight:normal;color:#333;">шт</div>
<div class="a nw " style="left:704.00px;top:361.89px;font-size:7.9px;line-height:1;font-weight:normal;color:#333;">Ступица BM EP 638 в сборе</div>
<div class="a nw" style="left:779.80px;width:300px;text-align:center;top:361.89px;font-size:7.9px;line-height:1;font-weight:normal;color:#333;">0</div>
<div class="a nw" style="left:447.70px;width:300px;text-align:center;top:377.45px;font-size:7.9px;line-height:1;font-weight:normal;color:#333;">6513</div>
<div class="a nw" style="left:496.50px;width:300px;text-align:center;top:377.45px;font-size:7.9px;line-height:1;font-weight:normal;color:#333;">6212 00 00 36</div>
<div class="a nw" style="left:540.00px;width:300px;text-align:center;top:377.45px;font-size:7.9px;line-height:1;font-weight:normal;color:#333;">шт</div>
<div class="a nw " style="left:704.00px;top:377.45px;font-size:7.9px;line-height:1;font-weight:normal;color:#333;">Ступица BM EP 638-640</div>
<div class="a nw" style="left:779.80px;width:300px;text-align:center;top:377.45px;font-size:7.9px;line-height:1;font-weight:normal;color:#333;">0</div>
<div class="a nw" style="left:447.70px;width:300px;text-align:center;top:393.01px;font-size:7.9px;line-height:1;font-weight:normal;color:#333;">6514</div>
<div class="a nw" style="left:496.50px;width:300px;text-align:center;top:393.01px;font-size:7.9px;line-height:1;font-weight:normal;color:#333;">4927 03 00 00</div>
<div class="a nw" style="left:540.00px;width:300px;text-align:center;top:393.01px;font-size:7.9px;line-height:1;font-weight:normal;color:#333;">шт</div>
<div class="a nw " style="left:704.00px;top:393.01px;font-size:7.9px;line-height:1;font-weight:normal;color:#333;">Ступица ДВ1661 в сб. УМ</div>
<div class="a nw" style="left:779.80px;width:300px;text-align:center;top:393.01px;font-size:7.9px;line-height:1;font-weight:normal;color:#333;">0</div>
<div class="a nw" style="left:447.70px;width:300px;text-align:center;top:408.57px;font-size:7.9px;line-height:1;font-weight:normal;color:#333;">6515</div>
<div class="a nw" style="left:496.50px;width:300px;text-align:center;top:408.57px;font-size:7.9px;line-height:1;font-weight:normal;color:#333;">6185 03 00 01</div>
<div class="a nw" style="left:540.00px;width:300px;text-align:center;top:408.57px;font-size:7.9px;line-height:1;font-weight:normal;color:#333;">шт</div>
<div class="a nw " style="left:704.00px;top:408.57px;font-size:7.9px;line-height:1;font-weight:normal;color:#333;">Ступица ДВ1661 ВМ</div>
<div class="a nw" style="left:779.80px;width:300px;text-align:center;top:408.57px;font-size:7.9px;line-height:1;font-weight:normal;color:#333;">0</div>
<div class="a nw" style="left:447.70px;width:300px;text-align:center;top:424.13px;font-size:7.9px;line-height:1;font-weight:normal;color:#333;">6516</div>
<div class="a nw" style="left:496.50px;width:300px;text-align:center;top:424.13px;font-size:7.9px;line-height:1;font-weight:normal;color:#333;">6198 01 00 03</div>
<div class="a nw" style="left:540.00px;width:300px;text-align:center;top:424.13px;font-size:7.9px;line-height:1;font-weight:normal;color:#333;">шт</div>
<div class="a nw " style="left:704.00px;top:424.13px;font-size:7.9px;line-height:1;font-weight:normal;color:#333;">Ступица ДВ1784 ВМ</div>
<div class="a nw" style="left:779.80px;width:300px;text-align:center;top:424.13px;font-size:7.9px;line-height:1;font-weight:normal;color:#333;">0</div>
<div class="a nw " style="left:584.70px;top:452.08px;font-size:7.7px;line-height:1;font-weight:bold;color:#2a2f3a;">Цена закупки</div>
<div class="a nw " style="left:641.00px;top:452.08px;font-size:7.7px;line-height:1;font-weight:bold;color:#2a2f3a;">Розничная цена</div>
<div class="a nw " style="left:706.60px;top:452.08px;font-size:7.7px;line-height:1;font-weight:bold;color:#2a2f3a;">Оптовая цена</div>
<div class="a nw " style="left:763.50px;top:452.08px;font-size:7.7px;line-height:1;font-weight:bold;color:#2a2f3a;">Последняя продажа</div>
<div class="a" style="left:582.80px;top:462.50px;width:260.80px;height:14.00px;background:#fff"></div>
<div class="a" style="left:582.00px;top:462.00px;width:262.00px;height:1.00px;background:#c2d0ec"></div>
<div class="a" style="left:582.00px;top:476.00px;width:262.00px;height:1.00px;background:#c2d0ec"></div>
<div class="a" style="left:582.00px;top:462.00px;width:1.00px;height:15.00px;background:#c2d0ec"></div>
<div class="a" style="left:639.00px;top:462.00px;width:1.00px;height:15.00px;background:#c2d0ec"></div>
<div class="a" style="left:704.00px;top:462.00px;width:1.00px;height:15.00px;background:#c2d0ec"></div>
<div class="a" style="left:761.00px;top:462.00px;width:1.00px;height:15.00px;background:#c2d0ec"></div>
<div class="a" style="left:843.00px;top:462.00px;width:1.00px;height:15.00px;background:#c2d0ec"></div>
<div class="a nw " style="left:585.50px;top:466.07px;font-size:7.6px;line-height:1;font-weight:normal;color:#444;">1</div>
<div class="a" style="left:589.00px;top:465.00px;width:31.00px;height:9.00px;background:linear-gradient(90deg,rgba(215,215,218,0.6),#d9d9dc 25%,#dcdcdf 75%,rgba(215,215,218,0));border-radius:3px;filter:blur(0.7px)"></div>
<div class="a nw " style="left:641.50px;top:466.07px;font-size:7.6px;line-height:1;font-weight:normal;color:#444;">3</div>
<div class="a" style="left:645.00px;top:465.00px;width:38.00px;height:9.00px;background:linear-gradient(90deg,rgba(215,215,218,0.6),#cdcdd0 25%,#d2d2d5 75%,rgba(215,215,218,0));border-radius:3px;filter:blur(0.7px)"></div>
<div class="a nw " style="left:707.00px;top:466.07px;font-size:7.6px;line-height:1;font-weight:normal;color:#444;">2</div>
<div class="a" style="left:711.00px;top:465.00px;width:25.00px;height:9.00px;background:linear-gradient(90deg,rgba(215,215,218,0.6),#d9d9dc 25%,#dcdcdf 75%,rgba(215,215,218,0));border-radius:3px;filter:blur(0.7px)"></div>
<div class="a nw " style="left:764.00px;top:466.07px;font-size:7.6px;line-height:1;font-weight:normal;color:#444;">Н</div>
<div class="a" style="left:768.00px;top:465.00px;width:62.00px;height:9.00px;background:linear-gradient(90deg,rgba(215,215,218,0.6),#d9d9dc 25%,#dcdcdf 75%,rgba(215,215,218,0));border-radius:3px;filter:blur(0.7px)"></div>
<svg class="a" style="left:953.4px;top:21px" width="12" height="12" viewBox="0 0 12 12"><circle cx="6" cy="6" r="5.5" fill="#ee6e70"/><path d="M3.9 3.9L8.1 8.1M8.1 3.9L3.9 8.1" stroke="#fff" stroke-width="1.1" stroke-linecap="round"/></svg>
<div class="a nw " style="left:404.80px;top:18.18px;font-size:9.95px;line-height:1;font-weight:normal;color:#b90f10;-webkit-text-stroke:0.25px #b90f10;letter-spacing:0.1px">Если несколько юр. лиц у поставщика,</div>
<div class="a nw " style="left:404.80px;top:30.88px;font-size:9.95px;line-height:1;font-weight:normal;color:#b90f10;-webkit-text-stroke:0.25px #b90f10;letter-spacing:0.1px">то можно выбрать любое</div>
<div class="a nw " style="left:663.80px;top:25.98px;font-size:9.95px;line-height:1;font-weight:normal;color:#b90f10;-webkit-text-stroke:0.25px #b90f10;letter-spacing:0.1px">поиск товаров по базе 1С</div>
<div class="a nw " style="left:852.20px;top:123.88px;font-size:9.95px;line-height:1;font-weight:normal;color:#b90f10;-webkit-text-stroke:0.25px #b90f10;letter-spacing:0.1px">категории товаров из 1С</div>
<div class="a nw " style="left:271.30px;top:195.08px;font-size:9.95px;line-height:1;font-weight:normal;color:#b90f10;-webkit-text-stroke:0.25px #b90f10;letter-spacing:0.1px">Покаждому товару можно посмотреть аналог из 1С</div>
<div class="a nw " style="left:190.30px;top:421.28px;font-size:9.95px;line-height:1;font-weight:normal;color:#b90f10;-webkit-text-stroke:0.25px #b90f10;letter-spacing:0.1px">Тип документа, который необходимо</div>
<div class="a nw " style="left:190.30px;top:434.28px;font-size:9.95px;line-height:1;font-weight:normal;color:#b90f10;-webkit-text-stroke:0.25px #b90f10;letter-spacing:0.1px">сформировать. Печатная форма попадает</div>
<div class="a nw " style="left:190.30px;top:447.48px;font-size:9.95px;line-height:1;font-weight:normal;color:#b90f10;-webkit-text-stroke:0.25px #b90f10;letter-spacing:0.1px">в сделку AmoCRM</div>
<div class="a nw " style="left:452.20px;top:422.68px;font-size:9.95px;line-height:1;font-weight:normal;color:#b90f10;-webkit-text-stroke:0.25px #b90f10;letter-spacing:0.1px">цены закупки, розничная и</div>
<div class="a nw " style="left:452.20px;top:435.48px;font-size:9.95px;line-height:1;font-weight:normal;color:#b90f10;-webkit-text-stroke:0.25px #b90f10;letter-spacing:0.1px">оптовая</div>
<div class="a nw " style="left:452.20px;top:448.48px;font-size:9.95px;line-height:1;font-weight:normal;color:#b90f10;-webkit-text-stroke:0.25px #b90f10;letter-spacing:0.1px">для удобства работы</div>
<div class="a nw " style="left:452.20px;top:461.78px;font-size:9.95px;line-height:1;font-weight:normal;color:#b90f10;-webkit-text-stroke:0.25px #b90f10;letter-spacing:0.1px">отдела продаж</div>
<svg class="a" style="left:0;top:0" width="1024" height="507" viewBox="0 0 1024 507"><polygon points="388.10,29.82 375.12,52.03 373.13,49.82 373.30,59.00 381.05,54.09 378.11,53.64 389.50,30.58" fill="#b90f10" stroke="#b90f10" stroke-width="0.4" stroke-linejoin="round"/><polygon points="653.94,23.65 632.55,53.26 630.81,50.86 630.00,60.00 638.23,55.94 635.36,55.19 655.26,24.55" fill="#b90f10" stroke="#b90f10" stroke-width="0.4" stroke-linejoin="round"/><polygon points="843.53,130.55 807.54,142.27 807.55,139.30 801.50,146.20 810.54,147.79 808.67,145.48 844.07,132.05" fill="#b90f10" stroke="#b90f10" stroke-width="0.4" stroke-linejoin="round"/><polygon points="259.97,189.19 235.79,175.54 237.97,173.52 228.80,173.80 233.81,181.49 234.22,178.55 259.23,190.61" fill="#b90f10" stroke="#b90f10" stroke-width="0.4" stroke-linejoin="round"/><polygon points="258.91,189.50 239.63,221.09 237.70,218.82 237.60,228.00 245.50,223.32 242.57,222.79 260.29,190.30" fill="#b90f10" stroke="#b90f10" stroke-width="0.4" stroke-linejoin="round"/><polygon points="275.34,416.27 345.60,370.88 346.31,373.77 350.50,365.60 341.34,366.26 343.72,368.04 274.46,414.93" fill="#b90f10" stroke="#b90f10" stroke-width="0.4" stroke-linejoin="round"/><polygon points="506.23,439.68 572.60,455.43 571.01,457.95 579.80,455.30 572.97,449.16 573.34,452.11 506.57,438.12" fill="#b90f10" stroke="#b90f10" stroke-width="0.4" stroke-linejoin="round"/></svg>
</body></html>
